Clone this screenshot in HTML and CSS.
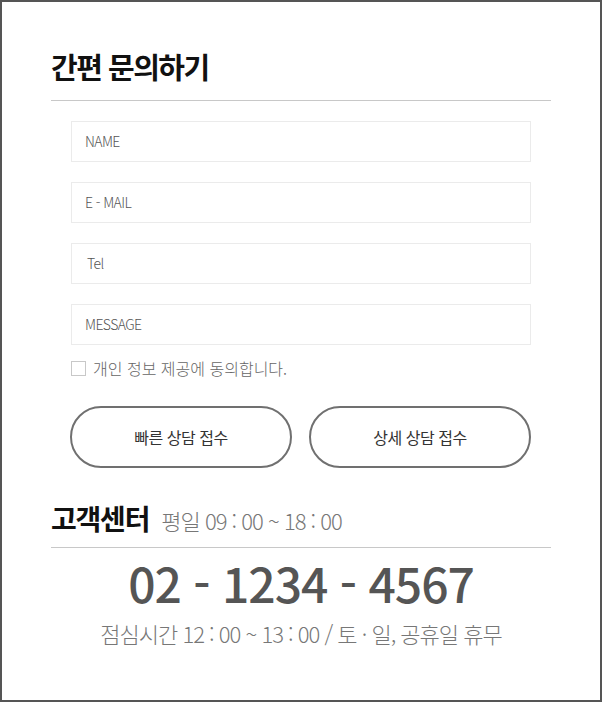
FILE: index.html
```html
<!DOCTYPE html>
<html lang="ko">
<head>
<meta charset="utf-8">
<link rel="stylesheet" href="styles.css">
</head>
<body>
<div class="frame">
  <h1 class="title">간편 문의하기</h1>
  <div class="rule"></div>
  <form class="form">
    <div class="field">NAME</div>
    <div class="field">E - MAIL</div>
    <div class="field field-tel">Tel</div>
    <div class="field">MESSAGE</div>
    <label class="agree"><span class="box"></span><span>개인 정보 제공에 동의합니다.</span></label>
    <div class="buttons">
      <div class="btn">빠른 상담 접수</div>
      <div class="btn">상세 상담 접수</div>
    </div>
  </form>
  <div class="cs-head">
    <h2 class="cs-title">고객센터</h2>
    <span class="cs-hours">평일 09 : 00 ~ 18 : 00</span>
  </div>
  <div class="rule"></div>
  <div class="phone">02 - 1234 - 4567</div>
  <div class="note">점심시간 12 : 00 ~ 13 : 00 / 토 · 일, 공휴일 휴무</div>
</div>
</body>
</html>
```

FILE: styles.css
```css
* { box-sizing: border-box; }
html, body { margin: 0; padding: 0; background: #fff; }
body { font-family: "Noto Sans CJK KR", "Noto Sans", sans-serif; }
.frame {
  width: 602px;
  height: 702px;
  border: 2px solid #555;
  padding: 0 49px;
  display: flex;
  flex-direction: column;
}
.title {
  margin: 44px 0 0;
  font-size: 29px;
  line-height: 40px;
  font-weight: 700;
  color: #111;
  letter-spacing: -1.5px;
}
.rule {
  height: 1px;
  background: #c8c8c8;
  width: 500px;
}
.title + .rule { margin-top: 14px; }
.form {
  margin: 20px 0 0 20px;
  width: 460px;
  display: flex;
  flex-direction: column;
}
.field {
  height: 41px;
  border: 1px solid #ebebeb;
  padding-left: 13px;
  font-size: 14px;
  line-height: 39px;
  font-weight: 300;
  color: #555;
  letter-spacing: -0.6px;
  margin-bottom: 20px;
}
.field-tel { padding-left: 15px; }
.field:nth-child(4) { margin-bottom: 12px; }
.agree {
  display: flex;
  align-items: center;
  gap: 7px;
  font-size: 16px;
  line-height: 22px;
  font-weight: 300;
  color: #666;
  letter-spacing: 0;
}
.box {
  width: 15px;
  height: 15px;
  border: 1px solid #c8c8c8;
  background: #fff;
}
.buttons {
  margin: 27px 0 0 -1px;
  display: flex;
  gap: 17px;
}
.btn {
  width: 222px;
  height: 62px;
  border: 2px solid #707070;
  border-radius: 31px;
  display: flex;
  align-items: center;
  justify-content: center;
  font-size: 16px;
  font-weight: 400;
  color: #333;
  letter-spacing: -0.5px;
}
.cs-head {
  margin-top: 31px;
  display: flex;
  align-items: baseline;
  gap: 12px;
}
.cs-title {
  margin: 0;
  font-size: 28px;
  line-height: 38px;
  font-weight: 700;
  color: #111;
  letter-spacing: -1.2px;
}
.cs-hours {
  font-size: 22px;
  font-weight: 300;
  color: #777;
  letter-spacing: -1px;
}
.cs-head + .rule { margin-top: 10px; }
.phone {
  margin-top: 2px;
  text-align: center;
  width: 500px;
  font-size: 48px;
  line-height: 64px;
  font-weight: 500;
  color: #555;
  letter-spacing: -1px;
}
.note {
  margin-top: 3px;
  text-align: center;
  width: 500px;
  font-size: 22px;
  line-height: 32px;
  font-weight: 300;
  color: #777;
  letter-spacing: -1px;
}
```
